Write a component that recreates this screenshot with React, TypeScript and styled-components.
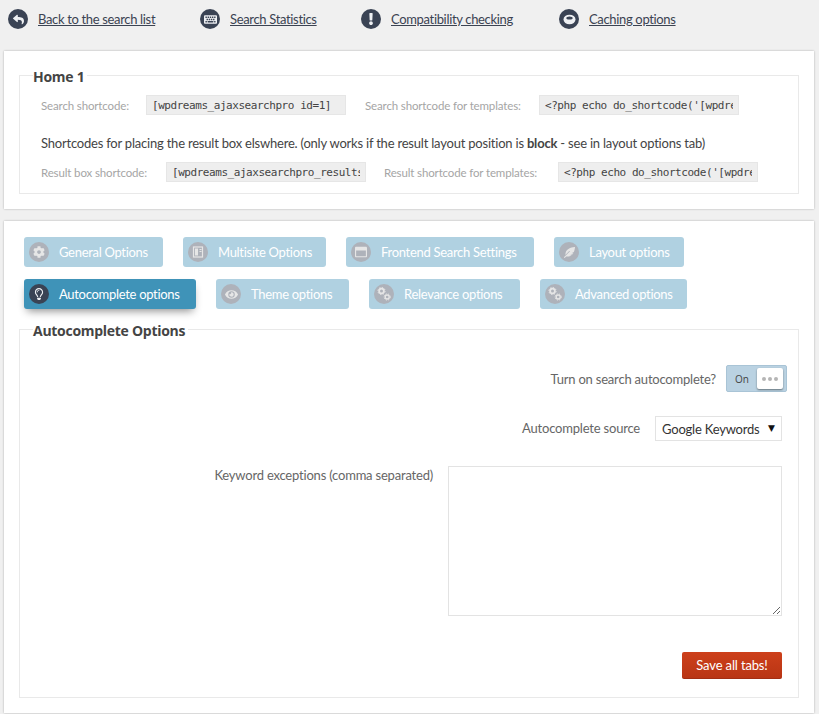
import React from "react";
import styled, { createGlobalStyle } from "styled-components";
import { FaCog, FaExclamation, FaEye, FaFeatherAlt, FaKeyboard, FaRegLightbulb, FaRegWindowMaximize, FaReply } from "react-icons/fa";

const Global = createGlobalStyle`
  html, body { margin: 0; padding: 0; background: #f0f0f0; }
  body { font-family: "Lato", "Noto Sans", sans-serif; color: #444; overflow: hidden; }
`;
const Page = styled.div`
  width: 819px;
  height: 714px;
  padding: 0 5px 0 4px;
  box-sizing: border-box;
`;
const TopNav = styled.nav`
  display: flex;
  align-items: center;
  height: 51px;
  padding: 0 0 13px 4px;
  box-sizing: border-box;
`;
const NavItem = styled.div<{ $w: number }>`
  display: flex;
  align-items: center;
  gap: 10px;
  width: ${(p) => p.$w}px;
`;
const NavLink = styled.a`
  font-size: 13px;
  letter-spacing: -0.34px;
  color: #3b4352;
  text-decoration: underline;
  white-space: nowrap;
`;
const Circle = styled.span<{ $tone?: "dark" | "grey" }>`
  width: 20px;
  height: 20px;
  flex: none;
  border-radius: 50%;
  display: flex;
  align-items: center;
  justify-content: center;
  color: ${(p) => (p.$tone === "grey" ? "#e6e6e6" : "#eef0f3")};
  background: ${(p) => (p.$tone === "grey" ? "#aeb2ba" : "#3a4354")};
`;
const Panel = styled.section<{ $h: number; $mb?: number }>`
  background: #fff;
  box-shadow: 0 0 2px rgba(0, 0, 0, 0.28);
  height: ${(p) => p.$h}px;
  margin-bottom: ${(p) => p.$mb ?? 0}px;
  box-sizing: border-box;
  padding: 15px;
`;
const Field = styled.fieldset<{ $h: number }>`
  margin: 0;
  height: ${(p) => p.$h}px;
  padding: 0;
  box-sizing: border-box;
  border: 1px solid #e9e9e9;
  min-width: 0;
`;
const Legend = styled.legend`
  font-family: "Open Sans", sans-serif;
  font-weight: 700;
  font-size: 14px;
  line-height: 18px;
  letter-spacing: -0.28px;
  color: #444;
  padding: 0 3px 0 0;
  margin-left: 13px;
  white-space: nowrap;
  transform: translateY(2px);
`;
const ShortcodeBody = styled.div`
  padding: 11px 21px 0;
`;
const ShortRow = styled.div`
  display: flex;
  align-items: center;
  height: 20px;
`;
const ShortLabel = styled.span<{ $w: number }>`
  font-size: 11.5px;
  letter-spacing: -0.14px;
  color: #a5a5a5;
  width: ${(p) => p.$w}px;
  flex: none;
  white-space: nowrap;
`;
const Code = styled.input<{ $mr?: number }>`
  font-family: "DejaVu Sans Mono", monospace;
  font-size: 11px;
  letter-spacing: -0.45px;
  color: #444;
  background: #eee;
  border: 1px solid #e6e6e6;
  border-radius: 0;
  outline: none;
  box-sizing: border-box;
  flex: none;
  width: 200px;
  height: 20px;
  padding: 0 5px;
  margin: 0 ${(p) => p.$mr ?? 0}px 0 0;
`;
const Note = styled.p`
  margin: 19px 0 10px;
  font-size: 13px;
  line-height: 18px;
  letter-spacing: -0.21px;
  color: #444;
  white-space: nowrap;
`;
const Tabs = styled.div`
  display: flex;
  flex-direction: column;
  gap: 12px;
  padding: 1px 5px 0;
  margin-bottom: 11px;
`;
const TabRow = styled.div`
  display: flex;
  gap: 20px;
`;
const Tab = styled.button<{ $w: number; $active?: boolean }>`
  all: unset;
  display: flex;
  align-items: center;
  gap: 10px;
  box-sizing: border-box;
  width: ${(p) => p.$w}px;
  height: 30px;
  padding-left: 5px;
  border-radius: 3px;
  font-size: 13px;
  letter-spacing: -0.3px;
  white-space: nowrap;
  color: #fff;
  background: ${(p) => (p.$active ? "#3f93b8" : "#b0d1e1")};
  box-shadow: ${(p) => (p.$active ? "0 5px 8px -3px rgba(0,0,0,0.45)" : "none")};
`;
const OptionRow = styled.div<{ $mt: number; $align?: string; $pr: number }>`
  display: flex;
  justify-content: flex-end;
  align-items: ${(p) => p.$align ?? "center"};
  margin-top: ${(p) => p.$mt}px;
  padding-right: ${(p) => p.$pr}px;
`;
const OptionLabel = styled.label<{ $gap: number; $mt?: number; $mb?: number }>`
  font-size: 13px;
  letter-spacing: -0.2px;
  color: #666;
  margin-right: ${(p) => p.$gap}px;
  margin-top: ${(p) => p.$mt ?? 0}px;
  margin-bottom: ${(p) => p.$mb ?? 0}px;
  white-space: nowrap;
`;
const Switch = styled.div`
  width: 61px;
  height: 27px;
  box-sizing: border-box;
  background: #bad2e2;
  border: 1px solid #a9c4d6;
  border-radius: 2px;
  display: flex;
  align-items: center;
  justify-content: space-between;
  padding: 2px 3px 2px 0;
`;
const SwitchText = styled.span`
  font-size: 10px;
  font-family: "Open Sans", sans-serif;
  color: #444;
  width: 30px;
  text-align: center;
`;
const Knob = styled.span`
  width: 26px;
  height: 21px;
  border-radius: 2px;
  background: #fff;
  box-shadow: 0 1px 2px rgba(0, 0, 0, 0.45);
  display: flex;
  align-items: center;
  justify-content: center;
  gap: 2px;
`;
const Dot = styled.i`
  width: 4px;
  height: 4px;
  border-radius: 50%;
  background: #b5b5b5;
`;
const SelectBox = styled.div`
  position: relative;
  width: 127px;
  height: 25px;
`;
const Select = styled.select`
  appearance: none;
  width: 100%;
  height: 100%;
  border: 1px solid #e3e3e3;
  border-radius: 0;
  background: #fff;
  box-sizing: border-box;
  padding: 0 0 0 6px;
  font-family: "Lato", sans-serif;
  font-size: 13px;
  letter-spacing: -0.2px;
  color: #333;
`;
const Arrow = styled.span`
  position: absolute;
  right: 7px;
  top: 5px;
  font-size: 9px;
  line-height: 14px;
  color: #111;
  font-family: "DejaVu Sans", sans-serif;
  pointer-events: none;
`;
const Textarea = styled.textarea`
  display: block;
  width: 334px;
  height: 150px;
  box-sizing: border-box;
  border: 1px solid #e3e3e3;
  border-radius: 0;
  background: #fff;
  outline: none;
  margin: 0;
`;
const SaveButton = styled.button`
  all: unset;
  width: 100px;
  height: 27px;
  box-sizing: border-box;
  text-align: center;
  border-radius: 2px;
  font-size: 13px;
  letter-spacing: -0.15px;
  line-height: 26px;
  color: #fff;
  background: linear-gradient(#cd401b, #b93514);
  border-bottom: 1px solid #a32e12;
`;

const Book = () => (
  <svg width="12" height="12" viewBox="0 0 12 12" fill="none" stroke="currentColor">
    <rect x="1.5" y="1" width="9" height="10" strokeWidth="1.2" />
    <rect x="3" y="2.5" width="3" height="7" fill="currentColor" stroke="none" />
    <path d="M7.5 3.5h2M7.5 5.5h2" strokeWidth="1" />
  </svg>
);
const Gears = () => (
  <svg width="16" height="16" viewBox="0 0 16 16" fill="none" stroke="currentColor">
    <circle cx="5.5" cy="5" r="2.4" strokeWidth="1.8" />
    <circle cx="5.5" cy="5" r="3.6" strokeWidth="1" strokeDasharray="1.4 1.4" />
    <circle cx="11.2" cy="11" r="2" strokeWidth="1.4" />
    <circle cx="11.2" cy="11" r="3.1" strokeWidth="1" strokeDasharray="1.3 1.2" />
  </svg>
);
const Drive = () => (
  <svg width="13" height="11" viewBox="0 0 13 11">
    <ellipse cx="6.5" cy="5.5" rx="6" ry="4.8" fill="currentColor" />
    <ellipse cx="6.5" cy="4" rx="3.2" ry="1.6" fill="#3a4354" />
  </svg>
);

const nav = [
  { w: 192, label: "Back to the search list", icon: <FaReply size={11} /> },
  { w: 161, label: "Search Statistics", icon: <FaKeyboard size={13} /> },
  { w: 198, label: "Compatibility checking", icon: <FaExclamation size={12} /> },
  { w: 130, label: "Caching options", icon: <Drive /> },
];
const row1 = [
  { w: 139, label: "General Options", icon: <FaCog size={12} /> },
  { w: 143, label: "Multisite Options", icon: <Book /> },
  { w: 188, label: "Frontend Search Settings", icon: <FaRegWindowMaximize size={12} /> },
  { w: 130, label: "Layout options", icon: <FaFeatherAlt size={11} /> },
];
const row2 = [
  { w: 172, label: "Autocomplete options", icon: <FaRegLightbulb size={12} />, active: true },
  { w: 133, label: "Theme options", icon: <FaEye size={13} /> },
  { w: 151, label: "Relevance options", icon: <Gears /> },
  { w: 147, label: "Advanced options", icon: <Gears /> },
];

type TabData = { w: number; label: string; icon: React.ReactNode; active?: boolean };
const renderTab = (t: TabData) => (
  <Tab key={t.label} $w={t.w} $active={t.active}>
    <Circle $tone={t.active ? "dark" : "grey"}>{t.icon}</Circle>
    {t.label}
  </Tab>
);

export default function App() {
  return (
    <Page>
      <Global />
      <TopNav>
        {nav.map((n) => (
          <NavItem key={n.label} $w={n.w}>
            <Circle>{n.icon}</Circle>
            <NavLink href="#">{n.label}</NavLink>
          </NavItem>
        ))}
      </TopNav>
      <Panel $h={158} $mb={12}>
        <Field $h={128}>
          <Legend>Home 1</Legend>
          <ShortcodeBody>
            <ShortRow>
              <ShortLabel $w={105}>Search shortcode:</ShortLabel>
              <Code $mr={19} readOnly value="[wpdreams_ajaxsearchpro id=1]" />
              <ShortLabel $w={174}>Search shortcode for templates:</ShortLabel>
              <Code readOnly value="<?php echo do_shortcode('[wpdreams_ajaxsearchpro id=1]'); ?>" />
            </ShortRow>
            <Note>
              Shortcodes for placing the result box elswhere. (only works if the result layout position is <b>block</b> - see in layout options tab)
            </Note>
            <ShortRow>
              <ShortLabel $w={125}>Result box shortcode:</ShortLabel>
              <Code $mr={18} readOnly value="[wpdreams_ajaxsearchpro_results id=1]" />
              <ShortLabel $w={174}>Result shortcode for templates:</ShortLabel>
              <Code readOnly value="<?php echo do_shortcode('[wpdreams_ajaxsearchpro_results id=1]'); ?>" />
            </ShortRow>
          </ShortcodeBody>
        </Field>
      </Panel>
      <Panel $h={492}>
        <Tabs>
          <TabRow>{row1.map(renderTab)}</TabRow>
          <TabRow>{row2.map(renderTab)}</TabRow>
        </Tabs>
        <Field $h={378}>
          <Legend>Autocomplete Options</Legend>
          <OptionRow $mt={27} $pr={11}>
            <OptionLabel $gap={10} htmlFor="sw">Turn on search autocomplete?</OptionLabel>
            <Switch id="sw">
              <SwitchText>On</SwitchText>
              <Knob><Dot /><Dot /><Dot /></Knob>
            </Switch>
          </OptionRow>
          <OptionRow $mt={24} $pr={16}>
            <OptionLabel $gap={15} $mb={2} htmlFor="src">Autocomplete source</OptionLabel>
            <SelectBox>
              <Select id="src" defaultValue="g">
                <option value="g">Google Keywords</option>
              </Select>
              <Arrow>▼</Arrow>
            </SelectBox>
          </OptionRow>
          <OptionRow $mt={25} $pr={16} $align="flex-start">
            <OptionLabel $gap={15} $mt={1} htmlFor="kw">Keyword exceptions (comma separated)</OptionLabel>
            <Textarea id="kw" />
          </OptionRow>
          <OptionRow $mt={36} $pr={16}>
            <SaveButton>Save all tabs!</SaveButton>
          </OptionRow>
        </Field>
      </Panel>
    </Page>
  );
}
